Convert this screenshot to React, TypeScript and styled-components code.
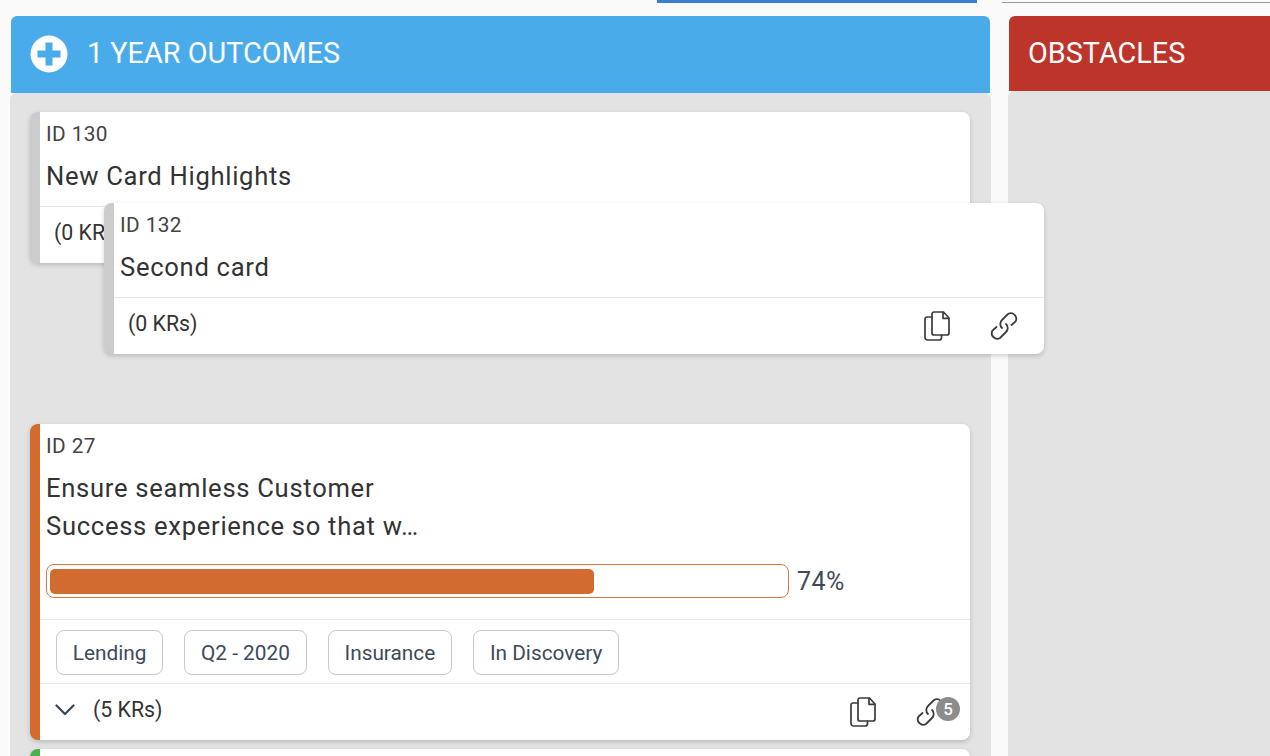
import * as React from "react";
import styled, { createGlobalStyle } from "styled-components";

const GlobalStyle = createGlobalStyle`
  html, body {
    margin: 0;
    height: 100%;
    overflow: hidden;
    background: #fafafa;
    font-family: Roboto, "Liberation Sans", sans-serif;
  }
`;

const CopyIcon = () => (
  <svg width="26" height="30" viewBox="0 0 26 30" fill="none" stroke="#3b3b3b" strokeWidth="1.7" strokeLinejoin="round" strokeLinecap="round">
    <path d="M8 6H3A2 2 0 0 0 1 8V26.500A2.500 2.500 0 0 0 3.500 29H15a2.500 2.500 0 0 0 2.500-2.500V24" />
    <path d="M8 3A2 2 0 0 1 10 1H19.500L25 7V22a2 2 0 0 1-2 2H10a2 2 0 0 1-2-2z" />
    <path d="M19 1.300V7.300H24.700" />
  </svg>
);

const LinkIcon = () => (
  <svg width="28" height="28" viewBox="0 0 28 28" fill="none" stroke="#3b3b3b" strokeWidth="1.8" strokeLinecap="round">
    <path d="M21.500 13 25.500 9.500A5.500 5.500 0 0 0 18 2L12 8A5.500 5.500 0 0 0 12 16" />
    <path d="M6.500 15 2.500 18.500A5.500 5.500 0 0 0 10 26L16 20A5.500 5.500 0 0 0 16 12" />
  </svg>
);

const ChevronIcon = () => (
  <svg width="20" height="12" viewBox="0 0 20 12" fill="none" stroke="#37455a" strokeWidth="2.2" strokeLinecap="round" strokeLinejoin="round">
    <path d="M1.500 1.500 10 10l8.500-8.500" />
  </svg>
);

const PlusIcon = () => (
  <PlusSvg width="38" height="38" viewBox="0 0 38 38">
    <circle cx="19" cy="19" r="18.500" fill="#fff" />
    <path d="M15.500 7.500h7v8h8v7h-8v8h-7v-8h-8v-7h8z" fill="#4aabea" />
  </PlusSvg>
);

const PlusSvg = styled.svg`
  margin-top: 3px;
`;

const TabStrip = styled.div`
  display: flex;
  gap: 25px;
  height: 16px;
  padding-left: 657px;
`;

const Tab = styled.div<{ $active?: boolean }>`
  height: ${(p) => (p.$active ? "3px" : "1px")};
  margin-top: ${(p) => (p.$active ? "0" : "2px")};
  background: ${(p) => (p.$active ? "#3a7bd0" : "#999")};
  flex: ${(p) => (p.$active ? "0 0 320px" : "1")};
`;

const Board = styled.div`
  display: flex;
  gap: 17px;
  height: 740px;
  padding-left: 10px;
  overflow: hidden;
`;

const Column = styled.section<{ $width: number }>`
  display: flex;
  flex-direction: column;
  width: ${(p) => p.$width}px;
  flex: none;
`;

const ColumnHeader = styled.header<{ $color: string; $height: number; $lift: number }>`
  display: flex;
  flex: none;
  align-items: center;
  gap: 19px;
  height: ${(p) => p.$height}px;
  margin: 0 1px;
  padding: 0 19px ${(p) => p.$lift}px;
  border-radius: 6px 6px 0 0;
  background: ${(p) => p.$color};
  color: #fff;
  font-size: 28.800px;
  box-sizing: border-box;
`;

const ColumnBody = styled.div`
  position: relative;
  flex: 1;
  min-height: 0;
  padding: 19px 20px 0;
  box-sizing: border-box;
  background: #e3e3e3;
  border-radius: 6px 6px 0 0;
`;

const Card = styled.article<{ $accent: string }>`
  width: 940px;
  box-sizing: border-box;
  background: #fff;
  border-left: 10px solid ${(p) => p.$accent};
  border-radius: 8px;
  box-shadow: 0 2px 5px rgba(0, 0, 0, 0.18);
  color: #333;
`;

const DraggedCard = styled(Card)`
  position: absolute;
  left: 94px;
  top: 110px;
  z-index: 2;
`;

const Placeholder = styled.div`
  height: 161px;
`;

const CardBody = styled.div`
  padding: 9px 6px 0;
  min-height: 85px;
`;

const CardId = styled.div`
  font-size: 20.800px;
  line-height: 26px;
  color: #444;
  letter-spacing: 0.4px;
`;

const CardTitle = styled.div`
  margin-top: 10px;
  font-size: 25.600px;
  line-height: 38px;
  letter-spacing: 0.7px;
`;

const ProgressRow = styled.div`
  display: flex;
  align-items: center;
  gap: 8px;
  margin-top: 19px;
  padding-bottom: 21px;
`;

const ProgressTrack = styled.div`
  width: 743px;
  height: 34px;
  box-sizing: border-box;
  padding: 3.500px 3px;
  border: 1px solid #d9793f;
  border-radius: 8px;
`;

const ProgressFill = styled.div<{ $color: string }>`
  height: 100%;
  background: ${(p) => p.$color};
  border-radius: 5px;
`;

const Percent = styled.span`
  font-size: 25px;
  color: #3d4a5c;
  letter-spacing: 0.5px;
`;

const TagRow = styled.div`
  display: flex;
  gap: 21.300px;
  height: 64px;
  padding: 10px 16px 0;
  box-sizing: border-box;
  border-top: 1px solid #e8e8e8;
`;

const Tag = styled.span`
  display: flex;
  align-items: center;
  height: 45px;
  padding: 0 15.700px;
  box-sizing: border-box;
  border: 1px solid #c8c8c8;
  border-radius: 8px;
  font-size: 20.800px;
  color: #3d4a5c;
`;

const CardFooter = styled.footer`
  display: flex;
  align-items: center;
  height: 57px;
  padding: 0 26px 0 14px;
  box-sizing: border-box;
  border-top: 1px solid #e8e8e8;
  font-size: 21.300px;
  color: #333;
`;

const KrCount = styled.span`
  margin-bottom: 5px;
`;

const Chevron = styled.span`
  display: flex;
  margin: 0 18px 4px 1px;
`;

const FooterActions = styled.div`
  display: flex;
  align-items: center;
  gap: 40px;
  margin-left: auto;
  margin-bottom: 1px;
`;

const IconSlot = styled.span`
  position: relative;
  display: flex;
`;

const Badge = styled.span`
  position: absolute;
  top: -1px;
  right: -16px;
  width: 24px;
  height: 24px;
  border-radius: 50%;
  background: #8c8c8c;
  color: #fff;
  font-size: 17px;
  font-weight: 500;
  line-height: 24px;
  text-align: center;
`;

const NextCard = styled(Card)`
  height: 40px;
  margin-top: 9px;
`;

const App = () => (
  <>
    <GlobalStyle />
    <TabStrip>
      <Tab $active />
      <Tab />
    </TabStrip>
    <Board>
      <Column $width={981}>
        <ColumnHeader $color="#4aabea" $height={77} $lift={4}>
          <PlusIcon />
          1 YEAR OUTCOMES
        </ColumnHeader>
        <ColumnBody>
          <Card $accent="#cccccc">
            <CardBody>
              <CardId>ID 130</CardId>
              <CardTitle>New Card Highlights</CardTitle>
            </CardBody>
            <CardFooter>
              <KrCount>(0 KRs)</KrCount>
            </CardFooter>
          </Card>
          <DraggedCard $accent="#cccccc">
            <CardBody>
              <CardId>ID 132</CardId>
              <CardTitle>Second card</CardTitle>
            </CardBody>
            <CardFooter>
              <KrCount>(0 KRs)</KrCount>
              <FooterActions>
                <IconSlot><CopyIcon /></IconSlot>
                <IconSlot><LinkIcon /></IconSlot>
              </FooterActions>
            </CardFooter>
          </DraggedCard>
          <Placeholder />
          <Card $accent="#d26b30">
            <CardBody>
              <CardId>ID 27</CardId>
              <CardTitle>
                Ensure seamless Customer
                <br />
                Success experience so that w…
              </CardTitle>
              <ProgressRow>
                <ProgressTrack>
                  <ProgressFill $color="#d26b30" style={{ width: "74%" }} />
                </ProgressTrack>
                <Percent>74%</Percent>
              </ProgressRow>
            </CardBody>
            <TagRow>
              <Tag>Lending</Tag>
              <Tag>Q2 - 2020</Tag>
              <Tag>Insurance</Tag>
              <Tag>In Discovery</Tag>
            </TagRow>
            <CardFooter>
              <Chevron><ChevronIcon /></Chevron>
              <KrCount>(5 KRs)</KrCount>
              <FooterActions>
                <IconSlot><CopyIcon /></IconSlot>
                <IconSlot>
                  <LinkIcon />
                  <Badge>5</Badge>
                </IconSlot>
              </FooterActions>
            </CardFooter>
          </Card>
          <NextCard $accent="#4caf50" />
        </ColumnBody>
      </Column>
      <Column $width={400}>
        <ColumnHeader $color="#bd352a" $height={75} $lift={2}>OBSTACLES</ColumnHeader>
        <ColumnBody />
      </Column>
    </Board>
  </>
);

export default App;
